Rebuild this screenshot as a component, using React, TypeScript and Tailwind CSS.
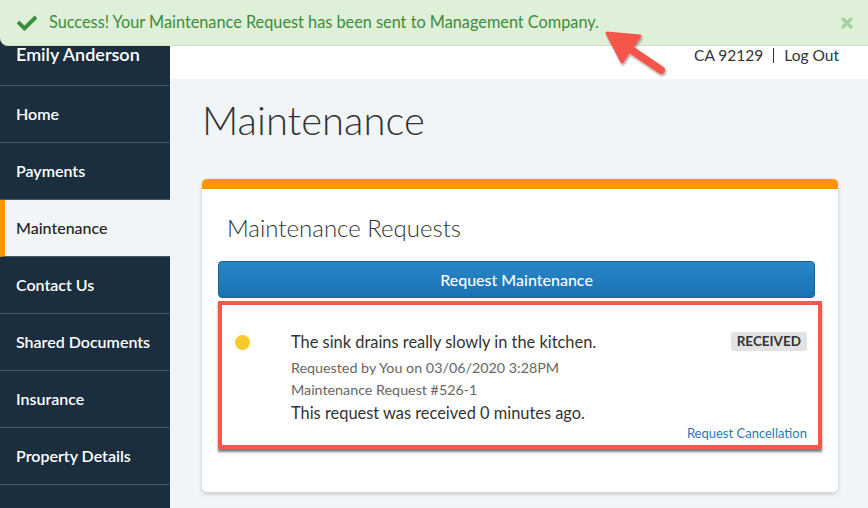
import React from 'react';

const navItems = ['Home', 'Payments', 'Maintenance', 'Contact Us', 'Shared Documents', 'Insurance', 'Property Details', 'Move-In / Move-Out'];

export default function App() {
  return (
    <div className="relative flex h-[508px] w-[868px] overflow-hidden font-['Lato','Noto_Sans',sans-serif] text-[#333]">
      {/* sidebar */}
      <aside className="w-[170px] shrink-0 bg-[#1b2e3e] text-white">
        <div className="h-[86px] border-b border-[#4a5866] px-4 pt-[41px] text-[18px] font-semibold">Emily Anderson</div>
        {navItems.map(item => {
          const active = item === 'Maintenance';
          return (
            <div
              key={item}
              className={
                active
                  ? 'flex h-[57px] items-center border-b border-[#4a5866] border-l-[5px] border-l-[#ff9500] bg-[#f1f5f8] pl-[11px] text-[16px] font-medium text-[#222]'
                  : 'flex h-[57px] items-center border-b border-[#4a5866] pl-4 text-[16px] font-semibold'
              }
            >
              {item}
            </div>
          );
        })}
      </aside>

      {/* main */}
      <main className="flex-1 bg-[#f1f5f8]">
        <header className="flex h-[79px] items-start justify-end bg-white pr-[29px] pt-[44px] text-[15.5px] text-[#333]">
          <span>CA 92129</span>
          <span className="mx-[10px] mt-[4px] h-[15px] w-px bg-[#333]" />
          <span>Log Out</span>
        </header>

        <div className="pl-[32px] pr-[30px]">
          <h1 className="mt-[15px] text-[40px] font-light leading-[52px] text-[#333]">Maintenance</h1>

          <div className="mt-[33px] rounded-[5px] border-t-[10px] border-[#ff9500] bg-white pb-[43px] pl-4 pr-[23px] shadow-[0_2px_4px_rgba(0,0,0,0.18)]">
            <h2 className="pl-[9px] pt-[24px] text-[24px] font-light leading-[30px] text-[#333]">Maintenance Requests</h2>
            <button className="mt-[18px] h-[37px] w-full rounded-[4px] border border-[#135f9a] bg-gradient-to-b from-[#2887c8] to-[#1a71b2] text-[16px] font-medium text-white">
              Request Maintenance
            </button>

            <div className="mt-[3px] mr-[-7px] border-[4px] border-[#f5574a] bg-white shadow-[0_3px_2px_rgba(0,0,0,0.5)]">
              <div className="flex items-start pl-[13px] pr-[11px] pt-[25px]">
                <span className="mt-[5px] h-[15px] w-[15px] shrink-0 rounded-full bg-[#f8c92a]" />
                <div className="ml-[41px] flex-1">
                  <div className="text-[16.4px] leading-[24px] text-[#333]">The sink drains really slowly in the kitchen.</div>
                  <div className="mt-[3px] text-[14.3px] leading-[22px] text-[#666]">Requested by You on 03/06/2020 3:28PM</div>
                  <div className="text-[14.3px] leading-[22px] text-[#666]">Maintenance Request #526-1</div>
                  <div className="text-[16.4px] leading-[24px] text-[#333]">This request was received 0 minutes ago.</div>
                </div>
                <span className="mt-[2px] rounded-[3px] bg-[#e2e2e2] px-[6px] text-[13.5px] font-bold leading-[19px] text-[#333]">RECEIVED</span>
              </div>
              <div className="pb-[4px] pr-[11px] text-right text-[13px] leading-[16px] text-[#2a7ab0]">Request Cancellation</div>
            </div>
          </div>
        </div>
      </main>

      {/* success alert */}
      <div className="absolute left-0 top-0 flex h-[46px] w-[868px] items-center rounded-bl-[8px] border-b border-[#cbe3c0] bg-[#dff0d8] pl-[17px] pr-[15px] text-[16.3px] text-[#3c8d3c]">
        <svg width="20" height="16" viewBox="0 0 512 400" className="mr-[12px] shrink-0">
          <path fill="#3c8d3c" d="M174 393L7 226c-10-10-10-26 0-36l36-36c10-10 26-10 36 0l113 112L433 25c10-10 26-10 36 0l36 36c10 10 10 26 0 36L210 393c-10 10-26 10-36 0z" />
        </svg>
        <span className="flex-1">Success! Your Maintenance Request has been sent to Management Company.</span>
        <svg width="12" height="12" viewBox="0 0 12 12">
          <path d="M2 2L10 10M10 2L2 10" stroke="#a5d2a0" strokeWidth="3.2" strokeLinecap="round" />
        </svg>
      </div>

      {/* annotation arrow */}
      <svg className="absolute left-[595px] top-[25px]" width="80" height="60" viewBox="0 0 80 60">
        <defs>
          <filter id="sh" x="-20%" y="-20%" width="140%" height="140%">
            <feDropShadow dx="1" dy="2" stdDeviation="1.2" floodColor="#000" floodOpacity="0.35" />
          </filter>
        </defs>
        <g filter="url(#sh)">
          <line x1="32" y1="22" x2="66" y2="45" stroke="#f5574a" strokeWidth="8" strokeLinecap="round" />
          <path d="M12 8 L45 11 L27 37 Z" fill="#f5574a" stroke="#f5574a" strokeWidth="3" strokeLinejoin="round" />
        </g>
      </svg>
    </div>
  );
}
